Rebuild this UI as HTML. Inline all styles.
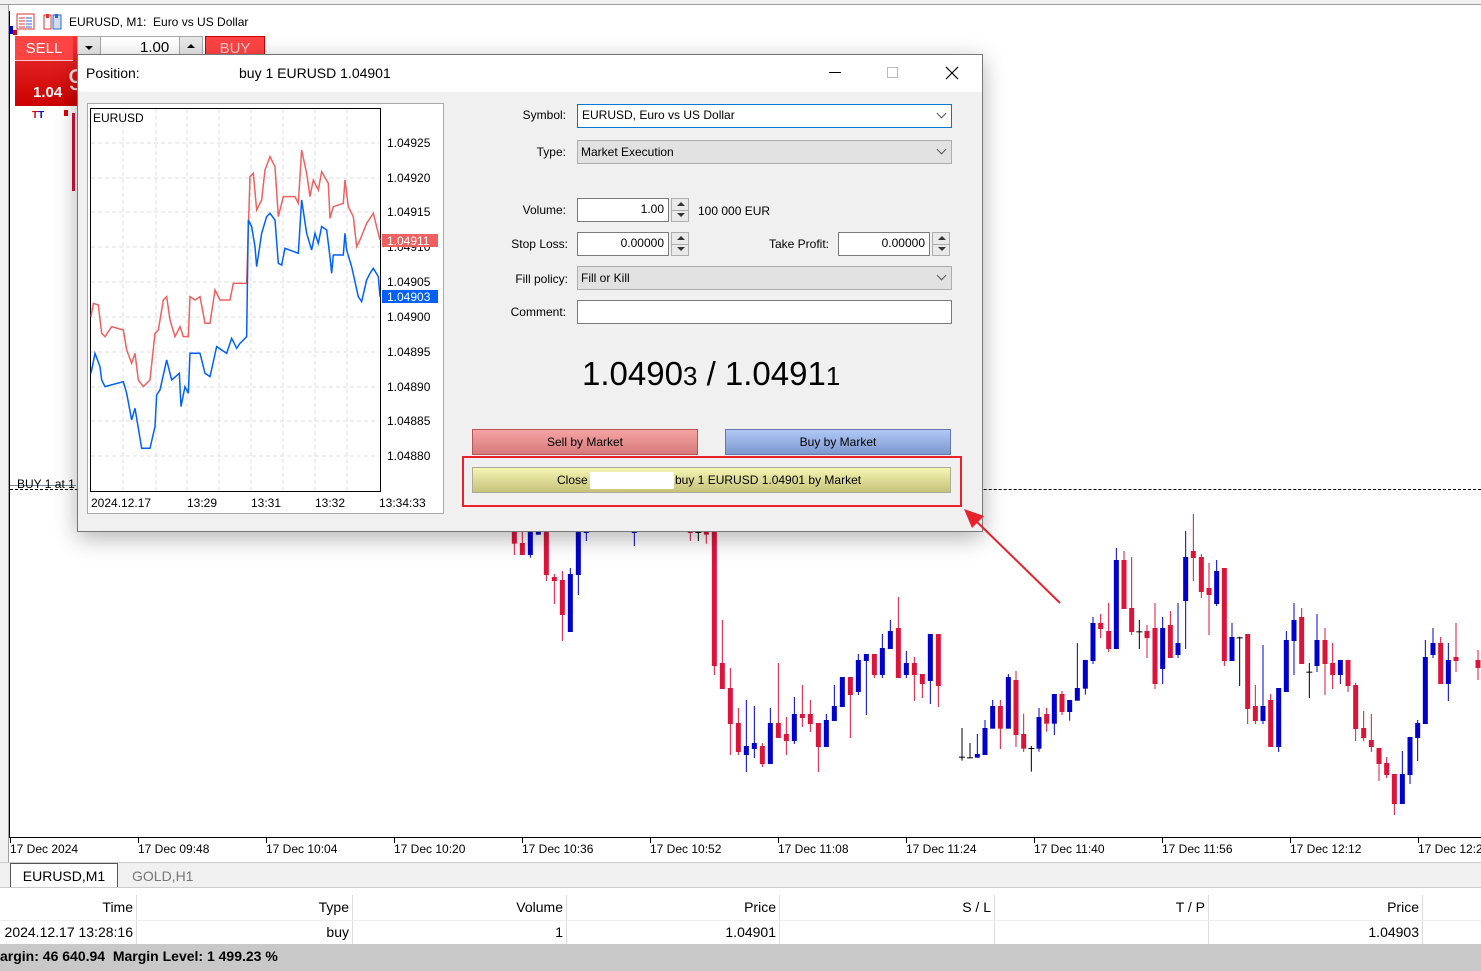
<!DOCTYPE html>
<html><head><meta charset="utf-8">
<style>
*{box-sizing:border-box;margin:0;padding:0}
body{width:1481px;height:971px;overflow:hidden;background:#fff;font-family:"Liberation Sans",sans-serif;font-size:13px;color:#000;position:relative}
.a{position:absolute}
.lbl{position:absolute;text-align:right;width:100px;font-size:12px}
.inp{position:absolute;background:#fff;border:1px solid #7a7a7a;font-size:12px;padding:3px 4px;height:24px}
.sel{position:absolute;background:#e1e1e1;border:1px solid #adadad;font-size:12px;padding:4px 3px;height:24px}
.chev{position:absolute;right:6px;top:5px;width:7px;height:7px;border-right:1px solid #555;border-bottom:1px solid #555;transform:rotate(45deg)}
.spin{position:absolute;width:18px;height:24px;border:1px solid #adadad;background:#e9e9e9}
.spin:before{content:"";position:absolute;left:5px;top:3px;border-left:4px solid transparent;border-right:4px solid transparent;border-bottom:4px solid #333}
.spin:after{content:"";position:absolute;left:5px;top:14px;border-left:4px solid transparent;border-right:4px solid transparent;border-top:4px solid #333}
.spin i{position:absolute;left:0;right:0;top:11px;border-top:1px solid #adadad}
.th,.td{position:absolute;text-align:right;font-size:14px}
</style></head><body>
<div class="a" style="left:0;top:0;width:1481px;height:5px;background:#f0f0f0;border-bottom:1px solid #a0a0a0"></div>
<div class="a" style="left:0;top:5px;width:9px;height:860px;background:#f0f0f0;border-right:1px solid #a0a0a0"></div>
<div class="a" style="left:9px;top:11px;width:1px;height:827px;background:#000"></div>
<svg class="a" style="left:16px;top:13px" width="48" height="18"><rect x="1" y="1" width="17" height="15" fill="#fff" stroke="#d33"/><path d="M3 5h6M3 8h6M3 11h6M3 14h6" stroke="#d33"/><path d="M10 5h6M10 8h6M10 11h6M10 14h6" stroke="#36c"/><rect x="28" y="2" width="7" height="14" fill="#fff" stroke="#d33"/><rect x="37" y="2" width="8" height="14" fill="#cde" stroke="#36c"/><rect x="30" y="1" width="3" height="4" fill="#d33"/><rect x="39" y="1" width="3" height="4" fill="#36c"/></svg>
<div class="a" style="left:69px;top:15px;font-size:12px">EURUSD, M1:&nbsp; Euro vs US Dollar</div>
<div class="a" style="left:10px;top:26px;width:3px;height:8px;background:#00c"></div>
<div class="a" style="left:13px;top:30px;width:4px;height:5px;background:#d00"></div>
<div class="a" style="left:15px;top:36px;width:62px;height:70px;background:linear-gradient(#e33,#c00)"></div>
<div class="a" style="left:15px;top:36px;width:58px;height:25px;background:#f44;color:#fff;font-size:15px;text-align:center;line-height:25px;border-bottom:1px solid #fcc">SELL</div>
<div class="a" style="left:33px;top:84px;color:#fff;font-weight:bold;font-size:15px">1.04</div>
<div class="a" style="left:68px;top:64px;color:#fdd;font-size:30px">9</div>
<div class="a" style="left:77px;top:36px;width:126px;height:22px;background:#fff;border:1px solid #aaa"></div>
<div class="a" style="left:77px;top:36px;width:24px;height:22px;background:#e8e8e8;border:1px solid #aaa"></div>
<div class="a" style="left:85px;top:46px;border-left:4px solid transparent;border-right:4px solid transparent;border-top:4px solid #000"></div>
<div class="a" style="left:179px;top:36px;width:24px;height:22px;background:#e8e8e8;border:1px solid #aaa"></div>
<div class="a" style="left:187px;top:44px;border-left:4px solid transparent;border-right:4px solid transparent;border-bottom:4px solid #000"></div>
<div class="a" style="left:140px;top:39px;font-size:15px">1.00</div>
<div class="a" style="left:205px;top:36px;width:60px;height:22px;background:#f44;color:#fcc;font-size:15px;text-align:center;line-height:24px;border:1px solid #c00">BUY</div>
<div class="a" style="left:32px;top:110px;color:#d00;font-size:10px;font-weight:bold">T<span style="color:#00c">T</span></div>
<div class="a" style="left:64px;top:110px;width:4px;height:6px;background:#d00"></div>
<div class="a" style="left:72px;top:113px;width:3px;height:78px;background:#d0103a"></div>
<div class="a" style="left:10px;top:489px;width:1471px;border-top:1px dashed #000"></div>
<div class="a" style="left:10px;top:485px;width:66px;border-top:1px solid #789"></div>
<div class="a" style="left:17px;top:477px;font-size:12px">BUY 1 at 1</div>
<svg class="a" id="cs" style="left:0;top:0" width="1481" height="838"></svg>
<div class="a" style="left:10px;top:837px;width:1471px;height:1px;background:#000"></div>
<div id="tx"></div>
<div class="a" style="left:0;top:862px;width:1481px;height:26px;background:#f0f0f0;border-top:1px solid #ccc;border-bottom:1px solid #ccc"></div>
<div class="a" style="left:10px;top:863px;width:108px;height:24px;background:#fff;border:1px solid #555;border-bottom:none;font-size:14px;text-align:center;line-height:24px">EURUSD,M1</div>
<div class="a" style="left:132px;top:868px;font-size:14px;color:#777">GOLD,H1</div>
<div class="a" style="left:0;top:895px;width:1481px;height:49px;background:#fff"></div>
<div id="tb"></div>
<div class="a" style="left:0;top:944px;width:1481px;height:27px;background:#c8c8c8"></div>
<div class="a" style="left:0;top:948px;font-size:14px;font-weight:bold">argin: 46 640.94&nbsp; Margin Level: 1 499.23 %</div>

<div class="a" style="left:77px;top:54px;width:906px;height:478px;background:#f0f0f0;border:1px solid #777;box-shadow:0 6px 22px rgba(0,0,0,.3)"></div>
<div class="a" style="left:78px;top:55px;width:904px;height:37px;background:#fff"></div>
<div class="a" style="left:86px;top:65px;font-size:14px">Position:</div>
<div class="a" style="left:239px;top:65px;font-size:14px">buy 1 EURUSD 1.04901</div>
<div class="a" style="left:829px;top:72px;width:12px;height:1px;background:#000"></div>
<div class="a" style="left:887px;top:67px;width:11px;height:11px;border:1px solid #bbb"></div>
<svg class="a" style="left:945px;top:66px" width="14" height="14"><path d="M1 1L13 13M13 1L1 13" stroke="#000" stroke-width="1.2"/></svg>
<div class="a" style="left:87px;top:103px;width:357px;height:411px;background:#fff;border:1px solid #aaa"></div>
<svg class="a" style="left:0;top:0" width="460" height="520">
<g stroke="#ddd" stroke-dasharray="4,3">
<path d="M123 109V490M156 109V490M187 109V490M219 109V490M251 109V490M283 109V490M315 109V490M347 109V490"/>
<path d="M91 143H379M91 178H379M91 212H379M91 247H379M91 282H379M91 317H379M91 352H379M91 387H379M91 421H379M91 456H379"/>
</g>
<rect x="90.5" y="108.5" width="290" height="383" fill="none" stroke="#000"/>
<g transform="translate(80,100) scale(0.3333)" fill="none" stroke-width="4.5">
<polyline stroke="#f06060" points="33,650 40,610 55,615 65,700 75,710 95,680 130,690 140,750 155,790 165,760 175,840 190,860 210,840 225,700 235,690 250,600 260,590 270,660 285,710 300,680 310,710 325,710 330,590 345,600 360,590 375,670 390,670 405,570 420,600 450,600 460,550 500,550 505,390 510,230 520,220 530,330 545,300 555,210 570,170 585,200 595,350 610,290 645,290 655,310 665,150 680,220 690,290 700,240 715,270 725,215 745,250 750,355 760,320 790,310 795,240 805,320 820,350 830,440 840,420 860,370 880,340 895,400 900,420"/>
<polyline stroke="#0060ff" points="33,820 45,760 60,800 65,840 75,860 130,845 140,880 155,960 165,925 175,985 185,1045 210,1045 225,980 230,885 240,870 260,780 270,820 275,840 298,820 303,920 315,860 325,880 330,760 360,760 375,820 390,830 410,740 440,760 455,715 470,745 480,730 500,710 505,360 515,380 525,440 530,500 545,400 560,350 570,340 585,360 595,490 605,495 615,445 655,460 665,300 680,400 695,450 705,400 715,430 725,380 740,390 750,470 755,520 760,465 790,465 795,400 800,450 815,500 825,545 835,590 845,605 860,540 870,520 880,505 895,530 900,590"/>
</g>
<g font-size="12" font-family="Liberation Sans,sans-serif">
<text x="387" y="147">1.04925</text><text x="387" y="182">1.04920</text><text x="387" y="216">1.04915</text><text x="387" y="251">1.04910</text><text x="387" y="286">1.04905</text><text x="387" y="321">1.04900</text><text x="387" y="356">1.04895</text><text x="387" y="391">1.04890</text><text x="387" y="425">1.04885</text><text x="387" y="460">1.04880</text>
<rect x="382" y="234" width="56" height="13" fill="#f06060"/><text x="387" y="245" fill="#fff">1.04911</text>
<rect x="382" y="290" width="56" height="13" fill="#0060ff"/><text x="387" y="301" fill="#fff">1.04903</text>
<text x="91" y="507">2024.12.17</text><text x="187" y="507">13:29</text><text x="251" y="507">13:31</text><text x="315" y="507">13:32</text><text x="379" y="507">13:34:33</text>
<text x="93" y="122">EURUSD</text>
</g>
</svg>
<div class="lbl" style="left:466px;top:108px">Symbol:</div>
<div class="inp" style="left:577px;top:104px;width:375px;border-color:#0078d7">EURUSD, Euro vs US Dollar<span class="chev"></span></div>
<div class="lbl" style="left:466px;top:145px">Type:</div>
<div class="sel" style="left:577px;top:140px;width:375px">Market Execution<span class="chev"></span></div>
<div class="lbl" style="left:466px;top:203px">Volume:</div>
<div class="inp" style="left:577px;top:198px;width:92px;text-align:right">1.00</div>
<div class="spin" style="left:671px;top:198px"><i></i></div>
<div class="a" style="left:698px;top:204px;font-size:12px">100 000 EUR</div>
<div class="lbl" style="left:468px;top:237px">Stop Loss:</div>
<div class="inp" style="left:577px;top:232px;width:92px;text-align:right">0.00000</div>
<div class="spin" style="left:671px;top:232px"><i></i></div>
<div class="lbl" style="left:729px;top:237px">Take Profit:</div>
<div class="inp" style="left:838px;top:232px;width:92px;text-align:right">0.00000</div>
<div class="spin" style="left:932px;top:232px"><i></i></div>
<div class="lbl" style="left:468px;top:272px">Fill policy:</div>
<div class="sel" style="left:577px;top:266px;width:375px">Fill or Kill<span class="chev"></span></div>
<div class="lbl" style="left:466px;top:305px">Comment:</div>
<div class="inp" style="left:577px;top:300px;width:375px"></div>
<div class="a" style="left:582px;top:355px;font-size:33px">1.0490<span style="font-size:26px">3</span> / 1.0491<span style="font-size:26px">1</span></div>
<div class="a" style="left:472px;top:429px;width:226px;height:26px;background:linear-gradient(#f5a3a3,#d57a7a);border:1px solid #b55;font-size:12px;text-align:center;line-height:25px">Sell by Market</div>
<div class="a" style="left:725px;top:429px;width:226px;height:26px;background:linear-gradient(#b0c8f5,#7d98d0);border:1px solid #67a;font-size:12px;text-align:center;line-height:25px">Buy by Market</div>
<div class="a" style="left:462px;top:456px;width:500px;height:51px;border:2px solid #e8212a"></div>
<div class="a" style="left:472px;top:467px;width:479px;height:26px;background:linear-gradient(#f5f5b2,#c6c27a);border:1px solid #aa9;font-size:12px;line-height:25px"><span style="position:absolute;left:84px">Close</span><span style="position:absolute;left:117px;top:4px;width:84px;height:17px;background:#fff"></span><span style="position:absolute;left:202px">buy 1 EURUSD 1.04901 by Market</span></div>
<svg class="a" style="left:0;top:0" width="1481" height="838"><line x1="1060" y1="603" x2="975" y2="520" stroke="#e8212a" stroke-width="2"/><polygon points="964,509 984,516 972,528" fill="#e8212a"/></svg>

<script>
var s='',c=document.getElementById('cs');
function C(x,col,bt,bb,wt,wb){var f=col=='r'?'#dc143c':col=='b'?'#0000cd':'#000';
if(wt==null)wt=bt;if(wb==null)wb=bb;
s+='<rect x="'+(x-0.5)+'" y="'+wt+'" width="1" height="'+(wb-wt)+'" fill="'+f+'"/>';
if(col=='k')s+='<rect x="'+(x-3)+'" y="'+bt+'" width="6" height="1" fill="#000"/>';
else s+='<rect x="'+(x-2.5)+'" y="'+bt+'" width="5" height="'+Math.max(1,bb-bt)+'" fill="'+f+'"/>';}
var z6=[[43,'r',96,131,96,165],[67,'r',129,165,96,165],[91,'b',96,165,96,173],[115,'b',96,104],[139,'r',96,225,96,243],[163,'r',231,243,222,312],[187,'r',240,345,213,423],[211,'b',222,396,204,396],[235,'b',96,225,96,285],[259,'b',96,96,96,123],[403,'b',96,96,96,138],[571,'r',96,96,96,123],[595,'k',96,96,96,123],[619,'r',96,104,96,131],[643,'r',96,498,96,525],[667,'r',489,567,360,567],[691,'r',564,672,504,765],[715,'r',669,756,624,765],[739,'b',738,765,600,816],[763,'b',729,747,618,774],[787,'r',738,792,729,801],[811,'b',669,792,624,792],[835,'r',669,714,489,714],[859,'r',702,723,651,765],[883,'b',642,723,591,732],[907,'r',642,654,555,681],[931,'r',642,672,600,696],[955,'r',669,741,669,816],[979,'b',660,741,642,741],[1003,'b',618,663,555,663],[1027,'b',531,621],[1051,'r',531,585,531,714],[1075,'b',480,576,462,585],[1099,'b',462,483,462,645],[1123,'r',462,525,462,534],[1147,'b',444,525,402,534],[1171,'b',393,447,360,447],[1195,'r',384,534,291,534],[1219,'b',489,525,453,534],[1243,'r',489,525,471,603],[1267,'r',522,552,522,594],[1291,'b',402,543,402,612],[1315,'r',402,558,402,621]];
z6.forEach(function(d){C(500+d[0]/3,d[1],500+d[2]/3,500+d[3]/3,d[4]!=null?500+d[4]/3:null,d[5]!=null?500+d[5]/3:null)});
var z7=[[18,'b',540,552,495,557],[42,'r',540,732],[66,'k',770,770,684,782],[90,'k',772,772,729,773],[112,'b',762,773,702,773],[135,'b',684,765,660,765],[158,'b',618,686,600,686],[181,'r',618,686,600,747],[205,'b',531,686,522,686],[228,'r',540,705,513,741],[251,'r',702,746,641,756],[274,'k',744,744,738,815],[297,'b',651,746,624,755],[320,'r',642,671,624,695],[343,'b',582,671,582,705],[366,'r',582,636,573,645],[389,'b',600,636,600,662],[412,'b',564,602,429,602],[436,'b',480,566,480,584],[459,'b',369,483,351,492],[482,'r',369,387,342,414],[506,'r',393,447,309,456],[529,'b',180,447,144,447],[552,'r',180,327,153,327],[575,'r',324,396,171,405],[598,'k',394,394,360,447],[621,'r',393,414,375,474],[645,'r',384,552,309,567],[668,'b',384,507,351,552],[691,'r',375,474,333,474],[714,'b',429,465,309,474],[737,'b',171,303,93,447],[760,'r',153,174,42,243],[784,'r',171,276,162,294],[807,'r',264,285,189,405],[830,'b',213,312,180,318],[853,'r',204,483,204,498],[876,'b',411,483,369,483],[899,'k',412,412,410,558],[923,'r',402,627,402,672],[946,'r',618,663,555,672],[969,'b',618,663,435,672],[992,'r',600,741,582,741],[1016,'b',564,741,564,756],[1039,'b',420,576,393,576],[1062,'b',360,423,309,525],[1085,'r',351,492,324,492],[1108,'k',515,515,489,594],[1131,'b',420,498,342,516],[1155,'r',420,492,384,585],[1178,'r',489,525,429,567],[1201,'b',480,525,480,552],[1224,'r',480,558,480,576],[1247,'r',555,687,549,723],[1271,'r',684,714,633,723],[1294,'r',720,741,642,756],[1317,'r',744,792,744,843],[1340,'r',789,825,771,834],[1363,'r',822,912,822,945],[1387,'b',822,912,753,912],[1410,'b',711,825,711,852],[1433,'b',669,714,660,783],[1456,'b',471,672,420,672],[1479,'b',429,465,384,474],[1502,'r',429,552,411,552],[1525,'b',480,552,429,603],[1548,'r',471,483,369,516]];
z7.slice(2).forEach(function(d){C(940+d[0]/3,d[1],500+d[2]/3,500+d[3]/3,d[4]!=null?500+d[4]/3:null,d[5]!=null?500+d[5]/3:null)});
C(1478,'r',660,668,650,680);
c.innerHTML=s;
var t='',L=['17 Dec 2024','17 Dec 09:48','17 Dec 10:04','17 Dec 10:20','17 Dec 10:36','17 Dec 10:52','17 Dec 11:08','17 Dec 11:24','17 Dec 11:40','17 Dec 11:56','17 Dec 12:12','17 Dec 12:28'];
L.forEach(function(l,i){var x=10+128*i;t+='<div class="a" style="left:'+x+'px;top:838px;width:1px;height:5px;background:#000"></div><div class="a" style="left:'+x+'px;top:842px;font-size:12px;white-space:nowrap">'+l+'</div>'});
document.getElementById('tx').innerHTML=t;
var cols=[[136,'Time','2024.12.17 13:28:16'],[352,'Type','buy'],[566,'Volume','1'],[779,'Price','1.04901'],[994,'S / L',''],[1208,'T / P',''],[1422,'Price','1.04903']];
var h='',p=0;cols.forEach(function(cl){h+='<div class="th" style="left:'+p+'px;width:'+(cl[0]-p-3)+'px;top:899px">'+cl[1]+'</div><div class="td" style="left:'+p+'px;width:'+(cl[0]-p-3)+'px;top:924px">'+cl[2]+'</div><div class="a" style="left:'+cl[0]+'px;top:895px;width:1px;height:49px;background:#ddd"></div>';p=cl[0]});
h+='<div class="a" style="left:0;top:920px;width:1481px;height:1px;background:#eee"></div>';
document.getElementById('tb').innerHTML=h;
</script>
</body></html>
